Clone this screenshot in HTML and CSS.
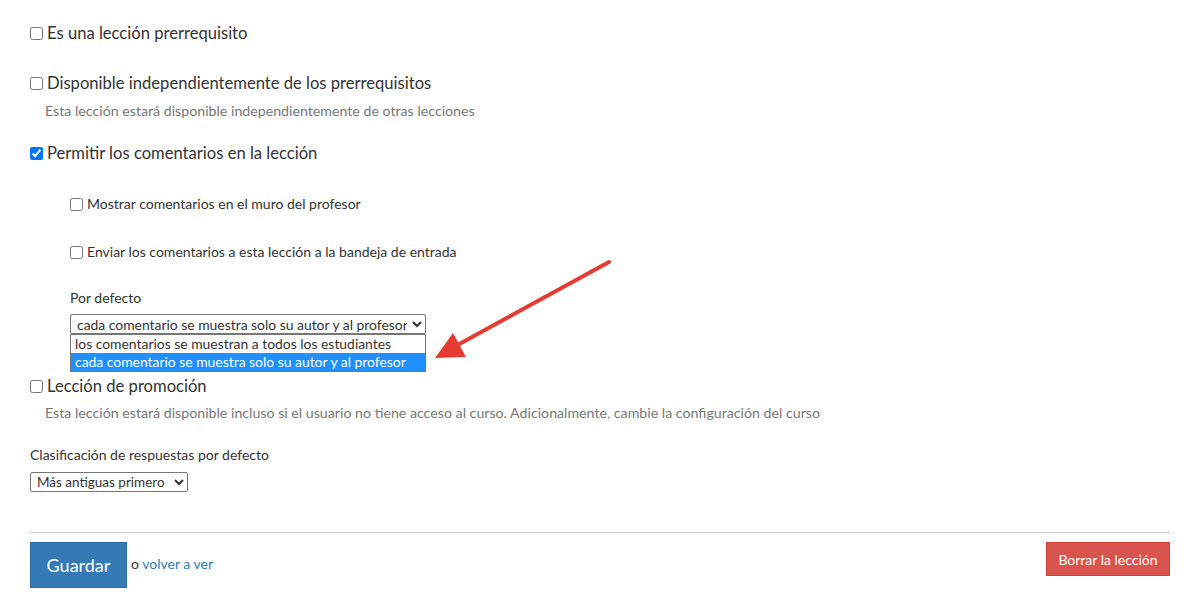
FILE: index.html
```html
<!DOCTYPE html>
<html lang="es">
<head>
<meta charset="utf-8">
<link rel="stylesheet" href="styles.css">
</head>
<body>
<div class="page">
  <label class="check-lg first"><input type="checkbox"> Es una lección prerrequisito</label>

  <label class="check-lg gap28"><input type="checkbox"> Disponible independientemente de los prerrequisitos</label>
  <p class="help">Esta lección estará disponible independientemente de otras lecciones</p>

  <label class="check-lg gap22"><input type="checkbox" checked> Permitir los comentarios en la lección</label>

  <div class="sub">
    <label class="check-sm gap30"><input type="checkbox"> Mostrar comentarios en el muro del profesor</label>
    <label class="check-sm gap28"><input type="checkbox"> Enviar los comentarios a esta lección a la bandeja de entrada</label>
    <div class="field-label gap26">Por defecto</div>
    <div class="select-wrap">
      <select class="sel sel-wide">
        <option>los comentarios se muestran a todos los estudiantes</option>
        <option selected>cada comentario se muestra solo su autor y al profesor</option>
      </select>
      <div class="dropdown">
        <div class="opt">los comentarios se muestran a todos los estudiantes</div>
        <div class="opt active">cada comentario se muestra solo su autor y al profesor</div>
      </div>
    </div>
  </div>

  <label class="check-lg gap41"><input type="checkbox"> Lección de promoción</label>
  <p class="help help-promo">Esta lección estará disponible incluso si el usuario no tiene acceso al curso. Adicionalmente, cambie la configuración del curso</p>

  <div class="field-label gap23">Clasificación de respuestas por defecto</div>
  <select class="sel sel-narrow">
    <option selected>Más antiguas primero</option>
    <option>Más recientes primero</option>
  </select>

  <hr class="divider">

  <div class="actions">
    <div class="left-actions">
      <button class="btn btn-primary">Guardar</button>
      <span class="back">o <a href="#">volver a ver</a></span>
    </div>
    <button class="btn btn-danger">Borrar la lección</button>
  </div>

  <svg class="arrow" width="1193" height="608" viewBox="0 0 1193 608">
    <line x1="609" y1="262" x2="452" y2="348" stroke="#e53b33" stroke-width="4" stroke-linecap="round"/>
    <polygon points="435,358 453,333 466,357" fill="#e53b33"/>
  </svg>
</div>
</body>
</html>
```

FILE: styles.css
```css
html, body {
  margin: 0;
  padding: 0;
  background: #fff;
}
body {
  font-family: Lato, "Open Sans", Arial, sans-serif;
  color: #333;
}
.page {
  position: relative;
  width: 1140px;
  margin-left: 30px;
  padding-top: 22px;
  height: 586px;
}
.check-lg {
  display: flex;
  align-items: center;
  font-size: 16.6px;
  line-height: 22px;
  height: 22px;
}
.check-sm {
  display: flex;
  align-items: center;
  font-size: 14px;
  line-height: 20px;
  height: 20px;
}
input[type="checkbox"] {
  margin: 0 4px 0 0;
  width: 13px;
  height: 13px;
}
.gap22 { margin-top: 22px; }
.gap23 { margin-top: 23px; }
.gap26 { margin-top: 26px; }
.gap28 { margin-top: 28px; }
.gap30 { margin-top: 30px; }
.gap41 { margin-top: 41px; }
.help {
  margin: 8px 0 0 15px;
  font-size: 14.2px;
  line-height: 18px;
  color: #777;
}
.help-promo {
  margin-top: 7px;
}
.sub {
  padding-left: 40px;
}
.field-label {
  font-size: 14px;
  line-height: 20px;
  color: #333;
}
.select-wrap {
  position: relative;
  margin-top: 6px;
  width: 356px;
}
.sel {
  display: block;
  font-family: Lato, "Open Sans", Arial, sans-serif;
  font-size: 13.5px;
  height: 20px;
  color: #333;
  border: 1px solid #767676;
  border-radius: 2px;
  background: #fff;
  padding: 0 2px;
}
.sel-wide {
  width: 356px;
  font-size: 13.9px;
}
.sel-narrow {
  width: 158px;
  margin-top: 7px;
}
.dropdown {
  position: absolute;
  left: 0;
  top: 20px;
  width: 354px;
  border: 1px solid #767676;
  background: #fff;
  z-index: 2;
}
.opt {
  font-size: 13.9px;
  line-height: 18px;
  height: 18px;
  padding-left: 4px;
  color: #333;
  white-space: nowrap;
}
.opt.active {
  background: #1e90ff;
  color: #fff;
}
.divider {
  margin: 40px 0 0 0;
  border: 0;
  border-top: 1px solid #ccc;
  height: 0;
}
.actions {
  margin-top: 9px;
  display: flex;
  justify-content: space-between;
  align-items: flex-start;
}
.left-actions {
  display: flex;
  align-items: center;
}
.btn {
  font-family: Lato, "Open Sans", Arial, sans-serif;
  color: #fff;
  border: 1px solid transparent;
  border-radius: 0;
  cursor: pointer;
}
.btn-primary {
  width: 97px;
  height: 46px;
  font-size: 18px;
  background: #337ab7;
  border-color: #2e6da4;
}
.btn-danger {
  width: 124px;
  height: 34px;
  font-size: 14px;
  background: #d9534f;
  border-color: #d43f3a;
}
.back {
  margin-left: 4px;
  margin-top: -3px;
  font-size: 14px;
  color: #333;
}
.back a {
  color: #337ab7;
  text-decoration: none;
}
.arrow {
  position: absolute;
  left: -30px;
  top: 0;
  pointer-events: none;
  z-index: 3;
}
```
